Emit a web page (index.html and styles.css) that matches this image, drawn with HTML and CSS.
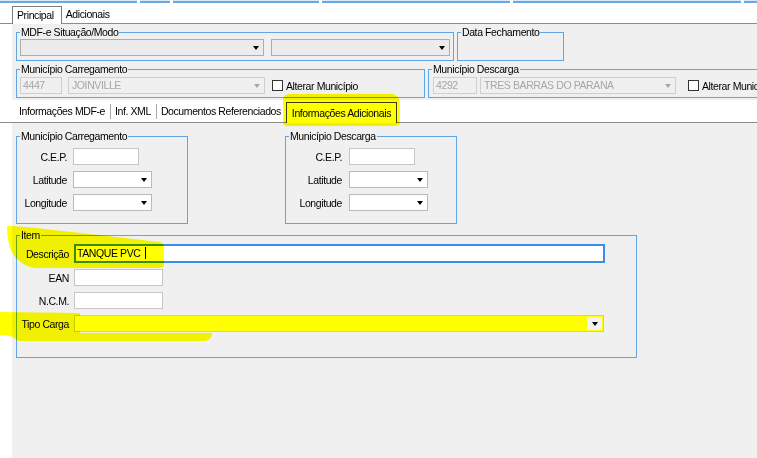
FILE: index.html
```html
<!DOCTYPE html>
<html lang="pt-BR">

<head>
    <meta charset="UTF-8">
    <meta name="viewport" content="width=device-width, initial-scale=1.0">
    <title>MDF-e</title>
    <link rel="stylesheet" href="styles.css">
</head>

<body>
    <div class="top-strip">
        <span class="strip-cell cell-1"></span>
        <span class="strip-cell cell-2"></span>
        <span class="strip-cell cell-3"></span>
        <span class="strip-cell cell-4"></span>
        <span class="strip-cell cell-5"></span>
        <span class="strip-cell cell-6"></span>
    </div>

    <div class="tabs tabs-main">
        <span class="tab active">Principal</span>
        <span class="tab">Adicionais</span>
    </div>

    <div class="panel panel-head">
        <div class="row">
            <fieldset class="group group-modo">
                <legend>MDF-e Situação/Modo</legend>
                <div class="group-line">
                    <div class="combo combo-flat combo-situacao"><span class="combo-text"></span><span class="combo-btn"></span></div>
                    <div class="combo combo-flat combo-modo"><span class="combo-text"></span><span class="combo-btn"></span></div>
                </div>
            </fieldset>
            <fieldset class="group group-fechamento">
                <legend>Data Fechamento</legend>
            </fieldset>
        </div>
        <div class="row row-mun">
            <fieldset class="group group-mun-carga">
                <legend>Município Carregamento</legend>
                <div class="group-line">
                    <div class="field field-off code-carga">4447</div>
                    <div class="combo combo-off mun-carga"><span class="combo-text">JOINVILLE</span><span class="combo-btn"></span></div>
                    <label class="check"><span class="box"></span>Alterar Município</label>
                </div>
            </fieldset>
            <fieldset class="group group-mun-desc">
                <legend>Município Descarga</legend>
                <div class="group-line">
                    <div class="field field-off code-desc">4292</div>
                    <div class="combo combo-off mun-desc"><span class="combo-text">TRES BARRAS DO PARANA</span><span class="combo-btn"></span></div>
                    <label class="check check-far"><span class="box"></span>Alterar Município</label>
                </div>
            </fieldset>
        </div>
    </div>

    <div class="tabs tabs-sub">
        <span class="tab sep">Informações MDF-e</span>
        <span class="tab sep">Inf. XML</span>
        <span class="tab">Documentos Referenciados</span>
        <span class="tab active">Informações Adicionais</span>
    </div>

    <div class="panel panel-body">
        <div class="row row-places">
            <fieldset class="group group-place">
                <legend>Município Carregamento</legend>
                <div class="form-grid">
                    <label>C.E.P.</label>
                    <div class="field cep"></div>
                    <label>Latitude</label>
                    <div class="combo coord"><span class="combo-text"></span><span class="combo-btn"></span></div>
                    <label>Longitude</label>
                    <div class="combo coord"><span class="combo-text"></span><span class="combo-btn"></span></div>
                </div>
            </fieldset>
            <fieldset class="group group-place">
                <legend>Município Descarga</legend>
                <div class="form-grid form-grid-wide">
                    <label>C.E.P.</label>
                    <div class="field cep"></div>
                    <label>Latitude</label>
                    <div class="combo coord"><span class="combo-text"></span><span class="combo-btn"></span></div>
                    <label>Longitude</label>
                    <div class="combo coord"><span class="combo-text"></span><span class="combo-btn"></span></div>
                </div>
            </fieldset>
        </div>

        <fieldset class="group group-item">
            <legend>Item</legend>
            <div class="form-grid form-grid-item">
                <label>Descrição</label>
                <div class="field field-focus desc">TANQUE PVC<span class="caret"></span></div>
                <label>EAN</label>
                <div class="field short"></div>
                <label>N.C.M.</label>
                <div class="field short"></div>
                <label>Tipo Carga</label>
                <div class="combo combo-mark tipo"><span class="combo-text"></span><span class="combo-btn"></span></div>
            </div>
        </fieldset>
    </div>

    <!-- highlighter marks drawn over the screen -->
    <svg class="marker" width="757" height="458" viewBox="0 0 757 458">
        <path d="M288,94 L393,94 C398,96 400,99 400,104 L400,122 C400,125 398,126 394,126 L288,126 C284,126 283,124 283,121 L283,101 C283,97 285,95 288,94 Z" />
        <path d="M7,226 C15,226 30,227 45,229 L160,242 C163,243 164,245 164,248 L164,264 C164,267 162,268 158,268 L35,268 C22,266 14,258 10,248 C8,240 7,233 7,226 Z" />
        <path d="M0,312 L80,313 L80,333 L212,333 C212,337 210,340 205,341 L18,341 C15,338 12,335 0,335 Z" />
    </svg>
</body>

</html>
```

FILE: styles.css
```css
* {
    box-sizing: border-box;
}

body {
    margin: 0;
    height: 458px;
    overflow: hidden;
    position: relative;
    display: flex;
    flex-direction: column;
    background-color: #fff;
    font-family: "Liberation Sans", Arial, sans-serif;
    font-size: 10.5px;
    letter-spacing: -0.4px;
    color: #000;
}

/* bottom of the toolbar boxes above */
.top-strip {
    flex: none;
    display: flex;
    gap: 3px;
    height: 3px;
}

.strip-cell {
    background-color: #dbe9f7;
    border-bottom: 2px solid #6aa8e2;
}

.cell-1 { width: 137px; }
.cell-2 { width: 30px; }
.cell-3 { width: 146px; }
.cell-4 { width: 188px; }
.cell-5 { width: 228px; }
.cell-6 { flex: 1; }

/* tabs */
.tabs {
    flex: none;
    display: flex;
    align-items: flex-end;
    padding-left: 12px;
    background-color: #fff;
    border-bottom: 1px solid #8c8c8c;
}

.tabs-main {
    height: 21px;
}

.tabs-sub {
    height: 23px;
    padding-left: 15px;
}

.tab {
    padding: 0 3px;
    line-height: 16px;
    white-space: nowrap;
}

.tabs-main .tab {
    height: 17px;
    padding: 0 4px;
}

.tabs-main .tab.active {
    height: 18px;
    margin-bottom: -1px;
    padding: 0 7px 0 4px;
    border: 1px solid #7d7d7d;
    border-bottom: none;
    background-color: #fff;
}

.tabs-sub .tab {
    height: 15px;
    margin-bottom: 3px;
    padding: 0 5px 0 4px;
    line-height: 15px;
}

.tabs-sub .tab:first-child {
    padding-left: 4px;
}

.tabs-sub .tab.sep {
    border-right: 1px solid #a8a8a8;
}

.tabs-sub .tab.active {
    height: 21px;
    margin-bottom: -1px;
    padding: 2px 5px 0;
    line-height: 16px;
    border: 1px solid #3c3c3c;
    border-bottom: none;
    background-color: #fff;
}

/* panels */
.panel {
    margin-left: 12px;
    background-color: #f0f0f0;
}

.panel-head {
    flex: none;
    padding: 2px 0 2px 4px;
}

.panel-body {
    flex: 1;
    padding: 7px 0 0 4px;
}

.row {
    display: flex;
}

.row-mun {
    margin-top: 2px;
}

.row-places {
    gap: 97px;
}

/* group boxes */
.group {
    flex: none;
    margin: 0;
    padding: 0;
    min-width: 0;
    border: 1px solid #62a5e4;
}

.group legend {
    margin-left: 3px;
    padding: 0 1px;
    line-height: 13px;
}

.group-line {
    display: flex;
    align-items: center;
    padding: 0 3px 4px 3px;
}

.group-modo {
    width: 438px;
}

.group-fechamento {
    width: 107px;
    margin-left: 3px;
}

.group-mun-carga {
    width: 409px;
}

.group-mun-carga .group-line,
.group-mun-desc .group-line {
    padding: 1px 3px 3px 3px;
}

.group-mun-desc {
    width: 400px;
    margin-left: 3px;
}

.group-mun-desc .group-line {
    padding-left: 4px;
}

.group-place {
    width: 172px;
    padding-bottom: 1px;
}

.group-item {
    width: 621px;
    margin-top: 5px;
}

/* fields */
.field {
    flex: none;
    height: 17px;
    padding-left: 2px;
    line-height: 15px;
    background-color: #fff;
    border: 1px solid #c6c6c6;
    white-space: nowrap;
}

.field-off {
    color: #a6a6a6;
    background-color: #f0f0f0;
    border-color: #cfcfcf;
}

.field-focus {
    height: 19px;
    padding-left: 1px;
    border: 2px solid #3a8de8;
}

.caret {
    display: inline-block;
    width: 1px;
    height: 12px;
    margin-left: 5px;
    vertical-align: -2px;
    background-color: #000;
}

.combo {
    flex: none;
    display: flex;
    height: 17px;
    background-color: #fff;
    border: 1px solid #b9b9b9;
}

.combo-text {
    flex: 1;
    padding-left: 3px;
    line-height: 15px;
    overflow: hidden;
    white-space: nowrap;
}

.combo-btn {
    width: 15px;
    display: flex;
    align-items: center;
    justify-content: center;
}

.combo-btn::before {
    content: "";
    border-left: 3.5px solid transparent;
    border-right: 3.5px solid transparent;
    border-top: 4px solid #000;
}

.combo-flat {
    background-color: #ececec;
    border-color: #adadad;
}

.combo-off {
    color: #a6a6a6;
    background-color: #f0f0f0;
    border-color: #cfcfcf;
}

.combo-off .combo-btn::before {
    border-top-color: #a6a6a6;
}

.combo-mark {
    background-color: #ffff00;
    border-color: #c9c9c9;
}

.combo-mark .combo-btn {
    margin: 1px;
    background-color: #f2f2f2;
}

.combo-situacao { width: 244px; }
.combo-modo { width: 179px; margin-left: 7px; }
.code-carga { width: 42px; }
.mun-carga { width: 197px; margin-left: 6px; }
.code-desc { width: 44px; }
.mun-desc { width: 196px; margin-left: 3px; }

.cep { width: 66px; }
.coord { width: 79px; }
.desc { width: 531px; }
.short { width: 89px; }
.tipo { width: 530px; }

.check {
    flex: none;
    display: flex;
    align-items: center;
    gap: 3px;
    margin-left: 7px;
    white-space: nowrap;
}

.check-far {
    margin-left: 12px;
}

.box {
    width: 11px;
    height: 11px;
    background-color: #fff;
    border: 1px solid #333;
}

/* label + control grids */
.form-grid {
    display: grid;
    grid-template-columns: 46px auto;
    column-gap: 6px;
    row-gap: 6px;
    align-items: center;
    justify-items: start;
    padding: 5px 0 11px 4px;
}

.form-grid label {
    justify-self: end;
    white-space: nowrap;
}

.form-grid-wide {
    grid-template-columns: 52px auto;
    column-gap: 7px;
}

.form-grid-item {
    grid-template-columns: 48px auto;
    column-gap: 5px;
    padding: 2px 0 25px 4px;
}

/* highlighter */
.marker {
    position: absolute;
    left: 0;
    top: 0;
    pointer-events: none;
    mix-blend-mode: multiply;
}

.marker path {
    fill: #ffff00;
}
```
